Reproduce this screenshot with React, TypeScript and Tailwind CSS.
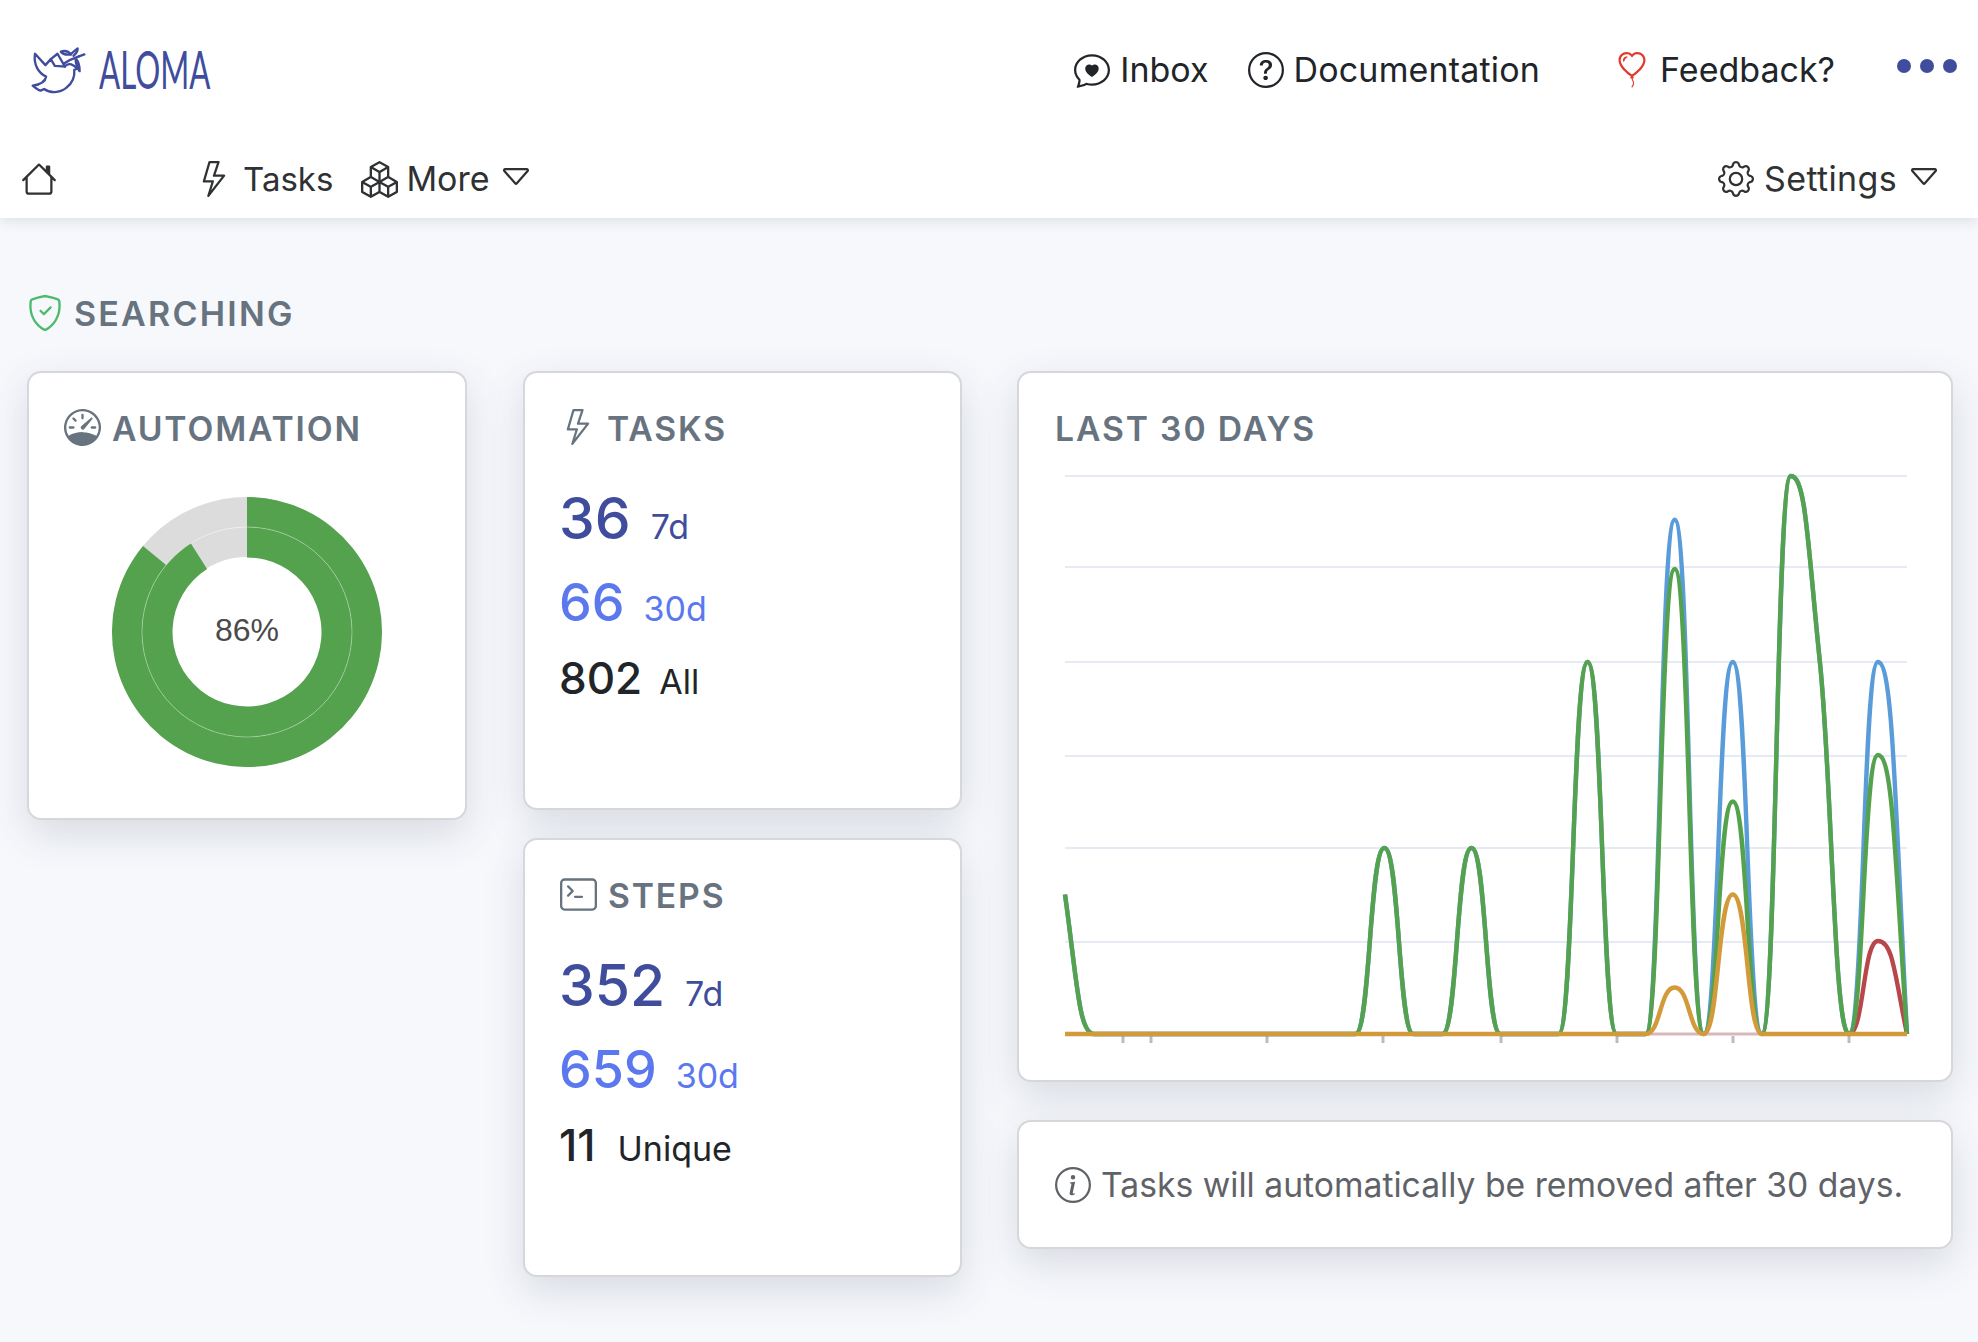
import React from 'react';
import {
  BsBalloonHeart,
  BsBoxes,
  BsCaretDown,
  BsChatHeart,
  BsGear,
  BsHouse,
  BsInfoCircle,
  BsLightning,
  BsQuestionCircle,
  BsShieldCheck,
  BsSpeedometer,
  BsTerminal,
} from 'react-icons/bs';

const Dove = () => (
  <svg viewBox="30 20 170 140" className="w-[57px] h-[47px]" fill="none" stroke="#3f4d9c" strokeWidth="7" strokeLinejoin="round" strokeLinecap="round">
    <path d="M45 40C40 72 55 98 78 108C76 122 62 132 38 135C46 142 54 148 62 150L72 145C90 158 118 158 138 142C156 128 164 108 162 88L172 84L158 74C148 68 138 72 134 78C122 78 112 76 104 76L92 56L76 74Z" />
    <path d="M92 56L112 40L134 78" />
    <path d="M130 70C142 62 158 54 176 48" />
    <path d="M122 34C134 30 146 34 152 42C140 44 128 42 122 34Z" />
    <path d="M152 42C156 36 164 30 172 24C172 32 168 40 160 46" />
    <path d="M166 54C172 60 178 70 178 92C170 82 166 70 166 54Z" />
    <path d="M176 48L192 42" />
  </svg>
);

// monotone cubic through the daily values, flat points get longer handles for the round peaks
const X0 = 5;
const STEP = 842 / 29;
const BASE = 574;
const UNIT = 93;

const buildPath = (values: number[], from = 0) => {
  const pts = values.map((v, i) => [X0 + i * STEP, BASE - v * UNIT]);
  const slopes = pts.slice(1).map((p, i) => (p[1] - pts[i][1]) / STEP);
  const tangents = pts.map((_, i) => {
    if (i === 0 || i === pts.length - 1) return 0;
    const a = slopes[i - 1];
    const b = slopes[i];
    if (a * b <= 0) return 0;
    return Math.sign(a) * Math.min(Math.abs(a), Math.abs(b), Math.abs(a + b) / 4) * 2;
  });
  tangents[0] = (3 * slopes[0] - tangents[1]) / 2;
  tangents[pts.length - 1] = (3 * slopes[slopes.length - 1] - tangents[pts.length - 2]) / 2;
  const handle = (m: number) => (m === 0 ? STEP * 0.52 : STEP * 0.42);
  let d = `M${pts[from][0]} ${pts[from][1]}`;
  for (let i = from + 1; i < pts.length; i++) {
    const m0 = tangents[i - 1];
    const m1 = tangents[i];
    const h0 = handle(m0);
    const h1 = handle(m1);
    d += `C${pts[i - 1][0] + h0} ${pts[i - 1][1] + m0 * h0} ${pts[i][0] - h1} ${pts[i][1] - m1 * h1} ${pts[i][0]} ${pts[i][1]}`;
  }
  return d;
};

const series = (points: Record<number, number>) => Array.from({ length: 30 }, (_, i) => points[i] ?? 0);

const lines = [
  { color: '#5a9cd9', d: buildPath(series({ 0: 1.5, 11: 2, 14: 2, 18: 4, 21: 5.53, 23: 4, 25: 6, 26: 4, 28: 4 })) },
  { color: '#b8474b', d: buildPath(series({ 28: 1 }), 27) },
  { color: '#54a24e', d: buildPath(series({ 0: 1.5, 11: 2, 14: 2, 18: 4, 21: 5, 23: 2.5, 25: 6, 26: 4, 28: 3 })) },
  { color: '#d29a3a', d: buildPath(series({ 21: 0.5, 23: 1.5 })) },
];

const gridLines = [16, 107, 202, 296, 388, 482];
const ticks = [63, 91, 207, 323, 441, 557, 673, 789];

const Chart = () => (
  <svg viewBox="0 0 852 600" className="w-[852px] h-[600px]" fill="none">
    {gridLines.map((y) => (
      <line key={y} x1="5" x2="847" y1={y} y2={y} stroke="#e5eaf5" strokeWidth="2" />
    ))}
    {ticks.map((x) => (
      <line key={x} x1={x} x2={x} y1="576" y2="583" stroke="#b9bcc4" strokeWidth="3" />
    ))}
    <line x1="585" x2="705" y1={BASE} y2={BASE} stroke="#d9b7ba" strokeWidth="3" />
    {lines.map((l) => (
      <path key={l.color} d={l.d} stroke={l.color} strokeWidth="4.4" />
    ))}
  </svg>
);

const arc = (r0: number, r1: number, pct: number) => {
  const a = pct * 2 * Math.PI;
  const s = Math.sin(a);
  const c = Math.cos(a);
  return `M0 ${-r1}A${r1} ${r1} 0 1 1 ${r1 * s} ${-r1 * c}L${r0 * s} ${-r0 * c}A${r0} ${r0} 0 1 0 0 ${-r0}Z`;
};

const Donut = () => (
  <div className="relative w-[270px] h-[270px]">
    <svg viewBox="-135 -135 270 270" className="w-[270px] h-[270px]">
      <circle r="120" fill="none" stroke="#dcdcdc" strokeWidth="30" />
      <circle r="90" fill="none" stroke="#dcdcdc" strokeWidth="30" />
      <path d={arc(105, 135, 0.86)} fill="#54a24e" />
      <path d={arc(74.5, 105, 0.91)} fill="#54a24e" />
      <circle r="105" fill="none" stroke="#ffffff" strokeOpacity="0.35" strokeWidth="1" />
    </svg>
    <span className="absolute inset-0 pb-[5px] flex items-center justify-center font-['Liberation_Sans',sans-serif] text-[32px] text-[#4a4a4a]">86%</span>
  </div>
);

const Card = ({ className, children }: { className: string; children: React.ReactNode }) => (
  <div className={`bg-white border-2 border-[#d6d7da] rounded-[14px] shadow-[0_14px_40px_rgba(60,70,90,0.16)] ${className}`}>{children}</div>
);

const CardTitle = ({ icon, gap, children }: { icon?: React.ReactNode; gap: string; children: React.ReactNode }) => (
  <div className={`flex items-center h-[40px] text-[33.7px] leading-none font-semibold tracking-[0.055em] text-[#67737f] ${gap}`}>
    {icon}
    <span className="mt-[3px]">{children}</span>
  </div>
);

const Stat = ({ value, label, color, size, gap, className }: { value: string; label: string; color: string; size: string; gap: string; className: string }) => (
  <div className={`flex items-baseline -ml-[1px] ${color} ${gap} ${className}`}>
    <span className={`${size} leading-none font-medium`}>{value}</span>
    <span className="text-[34px] leading-none">{label}</span>
  </div>
);

const StatCard = ({ icon, title, stats }: { icon: React.ReactNode; title: string; stats: [string, string, string][] }) => (
  <Card className="h-[439px] pt-[34px] pl-[35px]">
    <CardTitle icon={icon} gap="gap-[11px]">{title}</CardTitle>
    <Stat value={stats[0][0]} label={stats[0][1]} color="text-[#3f4d9c]" size="text-[57px]" gap={stats[0][2]} className="mt-[43px]" />
    <Stat value={stats[1][0]} label={stats[1][1]} color="text-[#5b78ee]" size="text-[52px]" gap={stats[1][2]} className="mt-[30px]" />
    <Stat value={stats[2][0]} label={stats[2][1]} color="text-[#212529]" size="text-[44px]" gap={stats[2][2]} className="mt-[27px]" />
  </Card>
);

export default function App() {
  return (
    <div className="min-h-[1342px] bg-[#f6f8fc] font-['Inter',sans-serif] text-[#212529]">
      <header className="bg-white shadow-[0_4px_12px_rgba(60,70,90,0.12)]">
        <div className="h-[140px] flex items-center pl-[30px] pr-[21px]">
          <Dove />
          <span className="ml-[12px] -mt-[3px] w-[112px] font-['Lato',sans-serif] font-normal text-[53px] leading-none text-[#3f4d9c] scale-x-[0.59] origin-left whitespace-nowrap">ALOMA</span>
          <div className="ml-auto flex items-center text-[34px] leading-none">
            <BsChatHeart className="w-[36px] h-[36px]" />
            <span className="ml-[10px]">Inbox</span>
            <BsQuestionCircle className="ml-[39px] w-[36px] h-[36px]" />
            <span className="ml-[10px] tracking-[0.005em]">Documentation</span>
            <BsBalloonHeart className="ml-[74px] w-[36px] h-[36px] text-[#e23a2e]" />
            <span className="ml-[10px]">Feedback?</span>
            <div className="ml-[62px] flex gap-[9px] -mt-[8px]">
              <span className="w-[14px] h-[14px] rounded-full bg-[#3f4d9c]" />
              <span className="w-[14px] h-[14px] rounded-full bg-[#3f4d9c]" />
              <span className="w-[14px] h-[14px] rounded-full bg-[#3f4d9c]" />
            </div>
          </div>
        </div>
        <div className="h-[78px] flex items-center pl-[21px] pr-[36px] text-[34px] leading-none text-[#2f3133]">
          <BsHouse className="w-[36px] h-[36px]" />
          <BsLightning className="ml-[139px] w-[36px] h-[36px]" />
          <span className="ml-[11px] text-[33px]">Tasks</span>
          <BsBoxes className="ml-[28px] w-[37px] h-[37px]" />
          <span className="ml-[8px]">More</span>
          <BsCaretDown className="ml-[8px] -mt-[4px] w-[36px] h-[36px]" />
          <BsGear className="ml-auto w-[36px] h-[36px]" />
          <span className="ml-[10px] tracking-[0.01em]">Settings</span>
          <BsCaretDown className="ml-[9px] -mt-[4px] w-[36px] h-[36px]" />
        </div>
      </header>

      <main className="pl-[27px] pr-[25px]">
        <div className="pt-[77px] h-[153px] flex items-start gap-[11px] leading-none text-[#67737f]">
          <BsShieldCheck className="w-[36px] h-[36px] text-[#4cbb6e]" />
          <span className="-mt-[1px] text-[34px] font-semibold tracking-[0.065em] leading-[40px]">SEARCHING</span>
        </div>

        <div className="flex items-start">
          <Card className="w-[440px] h-[449px] pt-[34px] pl-[35px]">
            <CardTitle gap="gap-[11px]" icon={<BsSpeedometer className="w-[37px] h-[37px]" />}>AUTOMATION</CardTitle>
            <div className="ml-[48px] mt-[50px]">
              <Donut />
            </div>
          </Card>

          <div className="ml-[56px] w-[439px] flex flex-col gap-[28px]">
            <StatCard
              title="TASKS"
              icon={<BsLightning className="w-[36px] h-[36px]" />}
              stats={[['36', '7d', 'gap-[20px]'], ['66', '30d', 'gap-[19px]'], ['802', 'All', 'gap-[17px]']]}
            />
            <StatCard
              title="STEPS"
              icon={<BsTerminal className="w-[37px] h-[37px]" />}
              stats={[['352', '7d', 'gap-[20px]'], ['659', '30d', 'gap-[19px]'], ['11', 'Unique', 'gap-[22px]']]}
            />
          </div>

          <div className="ml-[55px] flex-1 flex flex-col gap-[38px]">
            <Card className="h-[711px] pt-[34px]">
              <div className="pl-[36px]">
                <CardTitle gap="">LAST 30 DAYS</CardTitle>
              </div>
              <div className="ml-[41px] mt-[13px]">
                <Chart />
              </div>
            </Card>
            <Card className="h-[129px] flex items-center pl-[36px] text-[#5f6368]">
              <BsInfoCircle className="w-[36px] h-[36px]" />
              <span className="ml-[10px] text-[33.7px] leading-none whitespace-nowrap">Tasks will automatically be removed after 30 days.</span>
            </Card>
          </div>
        </div>
      </main>
    </div>
  );
}
